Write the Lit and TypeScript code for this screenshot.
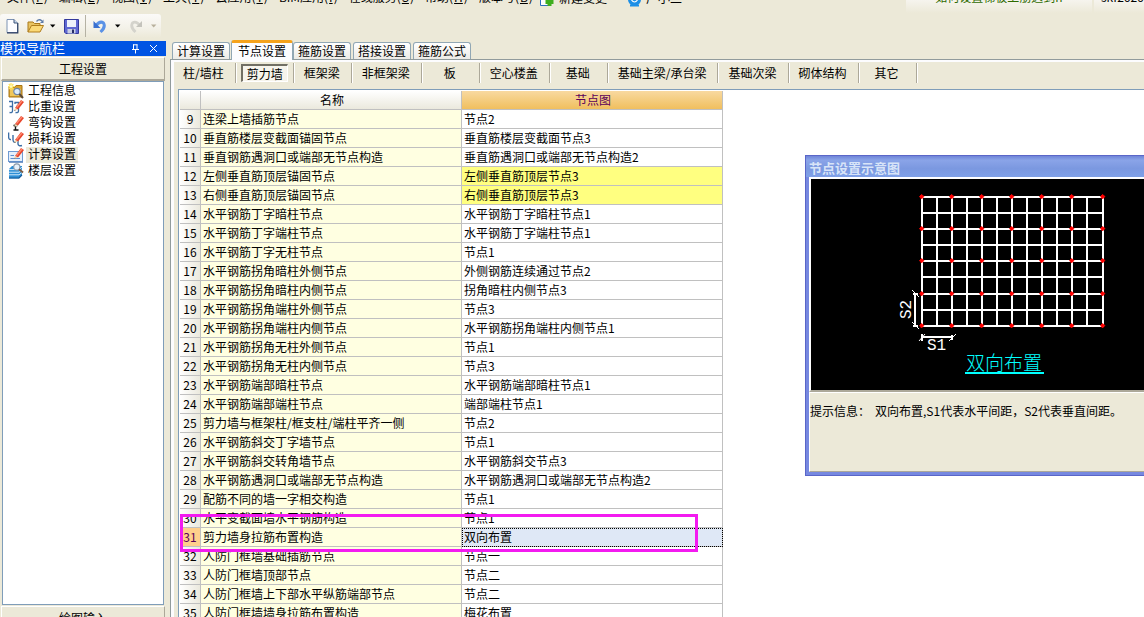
import { LitElement, html, svg, css } from "lit";
import { customElement, state } from "lit/decorators.js";
import { classMap } from "lit/directives/class-map.js";

type Row = [number, string, string];

const MENUS: [string, string][] = [
  ["文件", "F"],
  ["编辑", "E"],
  ["视图", "V"],
  ["工具", "T"],
  ["云应用", "Y"],
  ["BIM应用", "I"],
  ["在线服务", "S"],
  ["帮助", "H"],
  ["版本号", "B"],
];

const TABS = ["计算设置", "节点设置", "箍筋设置", "搭接设置", "箍筋公式"];

const PARTS = [
  "柱/墙柱", "剪力墙", "框架梁", "非框架梁", "板", "空心楼盖", "基础",
  "基础主梁/承台梁", "基础次梁", "砌体结构", "其它",
];

const ROWS: Row[] = [
  [9, "连梁上墙插筋节点", "节点2"],
  [10, "垂直筋楼层变截面锚固节点", "垂直筋楼层变截面节点3"],
  [11, "垂直钢筋遇洞口或端部无节点构造", "垂直筋遇洞口或端部无节点构造2"],
  [12, "左侧垂直筋顶层锚固节点", "左侧垂直筋顶层节点3"],
  [13, "右侧垂直筋顶层锚固节点", "右侧垂直筋顶层节点3"],
  [14, "水平钢筋丁字暗柱节点", "水平钢筋丁字暗柱节点1"],
  [15, "水平钢筋丁字端柱节点", "水平钢筋丁字端柱节点1"],
  [16, "水平钢筋丁字无柱节点", "节点1"],
  [17, "水平钢筋拐角暗柱外侧节点", "外侧钢筋连续通过节点2"],
  [18, "水平钢筋拐角暗柱内侧节点", "拐角暗柱内侧节点3"],
  [19, "水平钢筋拐角端柱外侧节点", "节点3"],
  [20, "水平钢筋拐角端柱内侧节点", "水平钢筋拐角端柱内侧节点1"],
  [21, "水平钢筋拐角无柱外侧节点", "节点1"],
  [22, "水平钢筋拐角无柱内侧节点", "节点3"],
  [23, "水平钢筋端部暗柱节点", "水平钢筋端部暗柱节点1"],
  [24, "水平钢筋端部端柱节点", "端部端柱节点1"],
  [25, "剪力墙与框架柱/框支柱/端柱平齐一侧", "节点2"],
  [26, "水平钢筋斜交丁字墙节点", "节点1"],
  [27, "水平钢筋斜交转角墙节点", "水平钢筋斜交节点3"],
  [28, "水平钢筋遇洞口或端部无节点构造", "水平钢筋遇洞口或端部无节点构造2"],
  [29, "配筋不同的墙一字相交构造", "节点1"],
  [30, "水平变截面墙水平钢筋构造", "节点1"],
  [31, "剪力墙身拉筋布置构造", "双向布置"],
  [32, "人防门框墙基础插筋节点", "节点一"],
  [33, "人防门框墙顶部节点", "节点二"],
  [34, "人防门框墙上下部水平纵筋端部节点", "节点二"],
  [35, "人防门框墙墙身拉筋布置构造", "梅花布置"],
];

const CHANGED = new Set([12, 13]);

const pencil = svg`
  <path d="M7 9 L13 1 L16 3 L10 10.5 Z" fill="#e8452c"/>
  <path d="M8 8 L13.4 1.4 L14.6 2.2 L9 9 Z" fill="#ff8a70"/>
  <path d="M7 9 L10 10.5 L6 12 Z" fill="#f3d9b0"/>
  <path d="M6 12 L7 10.8 L7.6 11.3 Z" fill="#333"/>`;

const NAV = [
  {
    label: "工程信息",
    icon: svg`
      <path d="M1 4 H7 L8 2.5 H14 V14 H1 Z" fill="#d9a532" stroke="#a87412"/>
      <path d="M2 6 H13 V13 H2 Z" fill="#f0c75a"/>
      <path d="M3 0 V7 M0 3.5 H7 M0.8 1 L5.4 6 M5.4 1 L0.8 6" stroke="#ffe45c" stroke-width="1.2"/>
      <circle cx="3.1" cy="3.5" r="1.3" fill="#fff8c0"/>
      <circle cx="9" cy="8.5" r="3.2" fill="#dcecfa" stroke="#6f86a6" stroke-width="1.2"/>
      <path d="M11.4 11 L15 15" stroke="#5b4a38" stroke-width="2"/>`,
  },
  {
    label: "比重设置",
    icon: svg`
      <path d="M1 2.5 H4.5 V12 Q4.5 14 1.5 13.5 M7 5 V3.5 H10.5 V12 Q10.5 14 7.5 13.5 M1.5 7.5 H4 M8 7.5 H10" fill="none" stroke="#3c6ea5" stroke-width="1.3"/>
      ${pencil}`,
  },
  {
    label: "弯钩设置",
    icon: svg`
      <path d="M7.5 9 V15 M5.5 10.5 H9.5 M5.5 15 H10.5" stroke="#111" stroke-width="1.4" fill="none"/>
      ${pencil}`,
  },
  {
    label: "损耗设置",
    icon: svg`
      <path d="M0.6 1.5 V6 Q0.8 9 3 8.5 M5 4 V9 Q5.5 12 7.5 11 M10 9 V13 Q10.5 15.5 14 14.5" fill="none" stroke="#3c6ea5" stroke-width="1.4"/>
      ${pencil}`,
  },
  {
    label: "计算设置",
    icon: svg`
      <rect x="0.5" y="4.5" width="14" height="10" fill="#e6f0fb" stroke="#6f9bd2"/>
      <path d="M2.5 8.5 H6 M2.5 11.5 H12" stroke="#5d8fd0" stroke-width="1.2"/>
      <path d="M1 15.2 H15" stroke="#3f6fb0" stroke-width="1"/>
      ${pencil}`,
  },
  {
    label: "楼层设置",
    icon: svg`
      <path d="M1 6 L4 3 H14 V12 L11 15.5 H1 Z" fill="#2d8fd6"/>
      <path d="M1 6.6 H11 L14 4.2 M1 9.2 H11 L14 6.8 M1 11.8 H11 L14 9.4" fill="none" stroke="#d4ecfb" stroke-width="1"/>
      <path d="M1 15 H11 L14 12" fill="none" stroke="#175a96" stroke-width="1.2"/>
      <circle cx="8.8" cy="4" r="3.1" fill="#e7f1fa" stroke="#8898aa" stroke-width="1.1"/>
      <path d="M11 6.3 L15 9.5" stroke="#7a5c44" stroke-width="2"/>`,
  },
];

@customElement("app-root")
export class AppRoot extends LitElement {
  @state() private nav = 4;
  @state() private tab = 1;
  @state() private part = 1;
  @state() private current = 31;

  static styles = css`
    :host {
      display: block;
      height: 100vh;
      overflow: hidden;
      position: relative;
      background: #ece9d8;
      color: #000;
      font: 12px/16px "Noto Sans CJK SC", "Liberation Sans", sans-serif;
    }
    * { box-sizing: border-box; }
    button {
      font: inherit;
      color: inherit;
      border: 0;
      padding: 0;
      margin: 0;
      background: none;
      white-space: nowrap;
    }
    svg { display: block; flex: none; }
    .page { display: flex; flex-direction: column; height: 100%; }

    .menubar { display: flex; height: 14px; padding-left: 7px; flex: none; }
    .menus { display: flex; align-items: flex-end; gap: 11px; height: 5px; overflow: hidden; flex: none; }
    .menus button { height: 16px; }
    .menus button u { padding: 0 1px; }
    .extra { display: flex; align-items: flex-end; height: 7px; overflow: hidden; gap: 5px; margin-left: 7px; }
    .extra button { display: flex; align-items: center; gap: 5px; height: 18px; padding-right: 16px; }
    .spacer { flex: 1; }
    .tip {
      width: 186px; height: 13px; margin-right: 2px; overflow: hidden;
      display: flex; justify-content: center; align-items: flex-end;
      padding-bottom: 8px;
      background: linear-gradient(#f6f4ee, #ece9d8);
      color: #2f6b00;
      text-decoration: none;
    }
    .tip span, .user span { flex: none; height: 16px; }
    .user {
      width: 50px; height: 13px; overflow: hidden; display: flex; align-items: flex-end;
      padding: 0 0 8px 7px; background: linear-gradient(#f6f4ee, #ece9d8);
    }

    .toolbar {
      display: flex; align-items: center; align-self: flex-start; flex: none;
      height: 24px; padding: 0 4px 0 6px; margin-bottom: 3px;
      border-radius: 3px;
      background: linear-gradient(#fbfaf8, #f3f1e8 60%, #ece9d8);
    }
    .toolbar button { height: 22px; display: flex; align-items: center; }
    .toolbar .new { width: 21px; }
    .toolbar .open { width: 23px; }
    .toolbar .undo { width: 22px; }
    .toolbar .drop { width: 14px; }
    .toolbar .save { width: 21px; }
    .rule { width: 1px; height: 22px; background: #b5b2a4; margin-right: 7px; }

    .body { flex: 1; min-height: 0; display: flex; gap: 4px; }
    .side { width: 166px; flex: none; display: flex; flex-direction: column; }
    .side-title {
      display: flex; align-items: center; height: 15px; flex: none;
      background: #0054e3; color: #fff; padding-right: 4px;
    }
    .side-title h2 { flex: 1; margin: 0; font: inherit; line-height: 14px; height: 15px; font-size: 13px; }
    .side-title button { width: 18px; display: flex; justify-content: center; }
    .group {
      height: 24px; flex: none; margin: 1px 1px 0 1px; background: #ece9d8;
      border: 1px solid #fff; border-right-color: #aca899; border-bottom: 2px solid #aca899;
    }
    .nav {
      flex: 1; min-height: 0; margin: 0 2px; padding: 1px 5px 0 5px;
      background: #fff; border: 1px solid #7f9db9;
    }
    .nav button { display: flex; height: 16px; gap: 2px; }
    .nav span { line-height: 14px; padding: 0 2px 2px; }
    .nav .on span { background: #ece9d8; }
    .below { height: 12px; flex: none; overflow: hidden; display: flex; }
    .below .group { flex: 1; line-height: 14px; }

    .work { flex: 1; min-width: 0; display: flex; flex-direction: column; }
    .tabs { display: flex; align-items: flex-end; height: 19px; padding-left: 2px; margin-top: -1px; flex: none; }
    .tabs button {
      width: 58px; height: 17px; margin-right: 2px; line-height: 16px;
      border: 1px solid #91a7b4; border-bottom: 0; border-radius: 3px 3px 0 0;
      background: linear-gradient(#fff, #ecebe6);
    }
    .tabs .on {
      width: 62px; height: 20px; margin: 0 0 -1px -1px; padding-bottom: 4px;
      background: #fcfcfe; border-top: 3px solid #f5a21b; position: relative;
    }
    .sheet {
      flex: 1; min-height: 0; display: flex; flex-direction: column;
      border: solid #919b9c; border-width: 1px 0 0 1px; box-shadow: inset 3px 2px #fcfcfe;
      padding: 3px 0 0 2px;
    }
    .parts { display: flex; height: 20px; flex: none; margin-bottom: 6px; }
    .parts div { border-right: 1px solid #aca899; box-shadow: 1px 0 #fff; min-width: 58px; padding: 0 11px 0 10px; display: flex; justify-content: center; }
    .parts button { line-height: 18px; }
    .parts .on { padding: 1px 5px; }
    .parts .on button {
      flex: 1; border: 1px solid #fff; border-top: 2px solid #716f64; border-left: 2px solid #716f64;
      background: #f6f4ec; line-height: 15px;
    }
    .grid {
      position: relative; flex: 1; min-height: 0; overflow: hidden; margin-left: 5px;
      background: #fff; border: solid #7f9db9; border-width: 1px 0 0 1px; padding: 1px 0 0 1px;
    }
    table { border-collapse: separate; border-spacing: 0; table-layout: fixed; width: 543px; }
    .c-no { width: 21px; }
    th, td {
      height: 19px; padding: 0 0 0 2px; line-height: 18px; white-space: nowrap; overflow: hidden;
      border: solid #c0c0c0; border-width: 0 1px 1px 0; text-align: left; font-weight: normal;
    }
    thead th { text-align: center; background: linear-gradient(#fff, #ebe9dd); }
    thead .hot { background: linear-gradient(#f8d9a0, #f0bf5e); color: #5a005a; }
    tbody th { text-align: center; padding: 0; background: linear-gradient(90deg, #fff, #ebe9dd); }
    td.name { background: #ffffe1; }
    td.changed { background: #ffff80; }
    .current th { background: #ffcf8b; color: #5a005a; }
    .current .node { background: #dfe8f6; outline: 1px dotted #000; outline-offset: -1px; }
    .mark { position: absolute; left: 1px; top: 424px; width: 518px; height: 38px; border: 3px solid #f31bf0; pointer-events: none; }

    .dialog {
      position: absolute; left: 805px; right: 0; top: 155px; height: 321px;
      display: flex; flex-direction: column;
      border: solid #5a66c8; border-width: 1px 0 1px 1px;
      background: #7688e0; padding: 0 0 3px 3px;
    }
    .dialog h2 {
      margin: 0 0 0 -3px; padding: 3px 0 0 3px; height: 21px; flex: none;
      font: bold 13px/17px "Noto Sans CJK SC", sans-serif; color: #d8e4f8;
      background: linear-gradient(#6f85d8, #8aa4e8 20%, #7b98e0 60%, #7fa0e8);
    }
    .view { background: #000; border: 2px solid #fff; border-right: 0; border-bottom: 2px solid #aca899; height: 215px; overflow: hidden; flex: none; }
    .hint { flex: 1; margin: 0; padding: 10px 0 0 0; background: #ece9d8; border: 1px solid #fff; border-right: 0; border-bottom-color: #aca899; white-space: nowrap; }
    .hint span { margin-left: 5px; }
    .cad { font-family: "Liberation Mono", monospace; font-size: 16px; fill: #fff; }
    .cad-title { font-family: "Noto Sans CJK SC", sans-serif; font-size: 19px; font-weight: 300; fill: #0ff; }
  `;

  private caret(color: string) {
    return html`<svg width="6" height="4" viewBox="0 0 6 4"><path d="M0 0.5 H5.4 L2.7 3.4 Z" fill=${color} /></svg>`;
  }

  private toolbar() {
    return html`<div class="toolbar">
      <button class="new" aria-label="新建">
        <svg width="13" height="16" viewBox="0 0 13 16">
          <path d="M1 1.5 H8 L11.5 5 V14.5 H1 Z" fill="#fdfdff" stroke="#7d93b4" />
          <path d="M8 1.5 V5 H11.5" fill="#c6d6ec" stroke="#3d5478" />
          <path d="M11.8 5 V14.8 H1" fill="none" stroke="#2c3d60" stroke-width="1.2" />
        </svg>
      </button>
      <button class="open" aria-label="打开">
        <svg width="18" height="16" viewBox="0 0 18 16">
          <path d="M1 14 V4 H6 L7.5 5.5 H13 V8" fill="#e9c462" stroke="#a9781b" />
          <path d="M1 14 L4.5 7.5 H16.5 L13 14 Z" fill="#fbd977" stroke="#b07d1c" />
          <path d="M9.5 3.5 Q12 0.5 15 3" fill="none" stroke="#5c7ba8" stroke-width="1.4" />
          <path d="M16.5 1.5 V5 H13 Z" fill="#5c7ba8" />
        </svg>
      </button>
      <button class="drop" aria-label="打开选项">${this.caret("#000")}</button>
      <button class="save" aria-label="保存">
        <svg width="15" height="15" viewBox="0 0 15 15">
          <path d="M0.5 0.5 H14.5 V14.5 H1.8 L0.5 13.2 Z" fill="#5f68d2" stroke="#33389c" />
          <rect x="3" y="1" width="9" height="7" fill="#eef2fb" />
          <rect x="3.5" y="10" width="8" height="4.5" fill="#c9cfe6" />
          <rect x="8" y="10.5" width="2" height="3.5" fill="#252b66" />
        </svg>
      </button>
      <span class="rule"></span>
      <button class="undo" aria-label="撤销">
        <svg width="14" height="15" viewBox="0 0 14 15">
          <path d="M3 6.5 Q7 1.5 10.5 4 Q13 8 7.5 13" fill="none" stroke="#5b92e6" stroke-width="3" />
          <path d="M0.5 2 V9 H7.5 Z" fill="#3a70d0" />
        </svg>
      </button>
      <button class="drop" aria-label="撤销选项">${this.caret("#000")}</button>
      <button class="undo" aria-label="恢复">
        <svg width="14" height="15" viewBox="0 0 14 15">
          <path d="M11 6.5 Q7 1.5 3.5 4 Q1 8 6.5 13" fill="none" stroke="#d4d3cc" stroke-width="2.8" />
          <path d="M13 2 V8 H7 Z" fill="#c4c3bc" />
        </svg>
      </button>
      ${this.caret("#b8b09c")}
    </div>`;
  }

  private diagram() {
    const xs = [...Array(12).keys()].map((i) => 111 + 15 * i).concat(292);
    const ys = [18, 34, 50, 66, 82, 98, 115, 131, 147];
    const dotX = xs.filter((_, i) => i % 2 === 0);
    const dotY = ys.filter((_, i) => i % 2 === 0);
    return html`<svg width="333" height="211" viewBox="0 0 333 211" role="img" aria-label="双向布置">
      <g stroke="#fff" stroke-width="2">
        ${xs.map((x) => svg`<path d="M${x} 17 V148" />`)}
        ${ys.map((y) => svg`<path d="M110 ${y} H293" />`)}
        <path d="M104 115 V147 M102 115 H107 M102 147 H107 M111 158 H141 M111 155 V162 M141 156 V161" />
      </g>
      <path d="M101 111 L108 118 M101 143 L108 150 M108 162 L114 155 M138 162 L145 155" stroke="#fff" />
      <g fill="#f00">
        ${dotY.map((y) => dotX.map((x) => svg`<path d="M${x - 2.5} ${y - 0.5} L${x - 0.5} ${y - 2.5} L${x + 2} ${y - 0.5} L${x - 0.5} ${y + 2} Z" stroke="#f00" stroke-width="0.8" />`))}
      </g>
      <text class="cad" x="116" y="171">S1</text>
      <text class="cad" transform="translate(100 140) rotate(-90)">S2</text>
      <text class="cad-title" x="155" y="191">双向布置</text>
      <rect x="154" y="193" width="79" height="2" fill="#0ff" />
    </svg>`;
  }

  render() {
    return html`<div class="page">
        <div class="menubar">
          <nav class="menus">
            ${MENUS.map(([name, key]) => html`<button>${name}(<u>${key}</u>)</button>`)}
          </nav>
          <div class="extra">
            <button>
              <svg width="14" height="18" viewBox="0 0 14 18">
                <path d="M0.5 0 V16.5 H9" fill="#fff" stroke="#2f6fc0" />
                <rect x="1" y="0" width="10" height="16" fill="#fff" />
                <path d="M9.5 8.5 V17 M5.5 13 H13.5" stroke="#3eae1e" stroke-width="4" />
              </svg>
              新建变更
            </button>
            <button>
              <svg width="13" height="18" viewBox="0 0 13 18">
                <circle cx="6.5" cy="10.5" r="6.5" fill="#1c8fe6" />
                <path d="M3.5 11 Q6.5 15 9.5 11" fill="none" stroke="#fff" stroke-width="1.2" />
                <path d="M2 16.5 H11" stroke="#1c8fe6" stroke-width="2" />
              </svg>
              广小二
            </button>
          </div>
          <span class="spacer"></span>
          <a class="tip" href="#"><span>如何设置梯板上筋遇到n</span></a>
          <div class="user"><span>skf2626</span></div>
        </div>
        ${this.toolbar()}
        <div class="body">
          <aside class="side">
            <div class="side-title">
              <h2>模块导航栏</h2>
              <button aria-label="固定">
                <svg width="9" height="10" viewBox="0 0 9 10">
                  <path d="M2.5 0.5 V5 M6 0.5 V5 M2 0.8 H6.5 M1 5.5 H8 M4.5 5.5 V9.5" fill="none" stroke="#fff" />
                </svg>
              </button>
              <button aria-label="关闭">
                <svg width="9" height="9" viewBox="0 0 9 9"><path d="M1 1 L8 8 M8 1 L1 8" stroke="#fff" /></svg>
              </button>
            </div>
            <button class="group">工程设置</button>
            <div class="nav">
              ${NAV.map(
                (n, i) => html`<button class=${classMap({ on: i === this.nav })} @click=${() => (this.nav = i)}>
                  <svg width="16" height="16" viewBox="0 0 16 16">${n.icon}</svg><span>${n.label}</span>
                </button>`,
              )}
            </div>
            <div class="below"><button class="group">绘图输入</button></div>
          </aside>
          <main class="work">
            <div class="tabs">
              ${TABS.map(
                (t, i) => html`<button class=${classMap({ on: i === this.tab })} @click=${() => (this.tab = i)}>${t}</button>`,
              )}
            </div>
            <section class="sheet">
              <div class="parts">
                ${PARTS.map(
                  (p, i) => html`<div class=${classMap({ on: i === this.part })}>
                    <button @click=${() => (this.part = i)}>${p}</button>
                  </div>`,
                )}
              </div>
              <div class="grid">
                <table>
                  <colgroup><col class="c-no" /><col /><col /></colgroup>
                  <thead>
                    <tr><th></th><th scope="col">名称</th><th scope="col" class="hot">节点图</th></tr>
                  </thead>
                  <tbody>
                    ${ROWS.map(
                      ([no, name, node]) => html`<tr
                        class=${classMap({ current: no === this.current })}
                        @click=${() => (this.current = no)}
                      >
                        <th scope="row">${no}</th>
                        <td class="name">${name}</td>
                        <td class=${classMap({ node: true, changed: CHANGED.has(no) })}>${node}</td>
                      </tr>`,
                    )}
                  </tbody>
                </table>
                <div class="mark"></div>
              </div>
            </section>
          </main>
        </div>
      </div>
      <section class="dialog">
        <h2>节点设置示意图</h2>
        <div class="view">${this.diagram()}</div>
        <p class="hint">提示信息：<span>双向布置,S1代表水平间距，S2代表垂直间距。</span></p>
      </section>`;
  }
}
